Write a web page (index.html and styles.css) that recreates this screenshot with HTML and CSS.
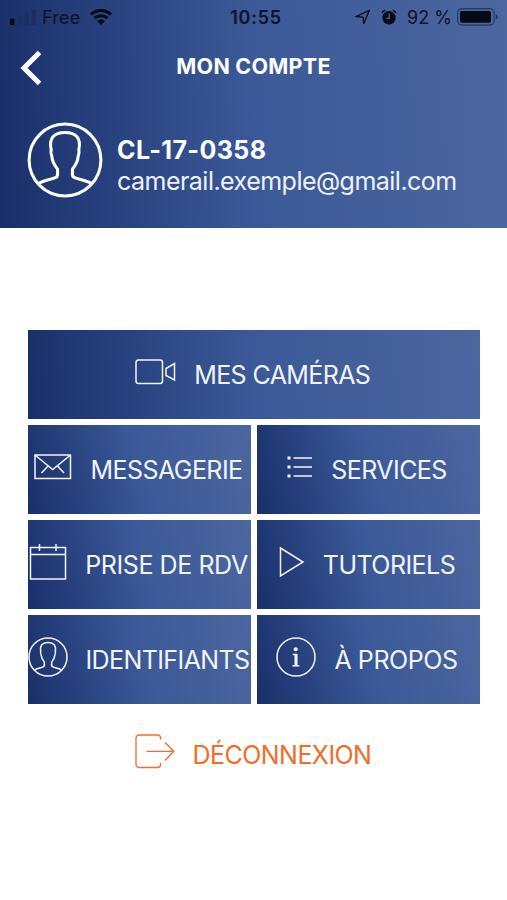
FILE: index.html
```html
<!DOCTYPE html>
<html lang="fr">

<head>
    <meta charset="UTF-8">
    <meta name="viewport" content="width=device-width, initial-scale=1.0">
    <title>Mon compte</title>
    <link rel="stylesheet" href="styles.css">
</head>

<body>
    <header class="header">
        <div class="status-bar">
            <div class="status-left">
                <svg class="signal" width="27" height="16" viewBox="0 0 27 16">
                    <rect x="0" y="9.500" width="4.500" height="6.500" rx="1" />
                    <rect class="off" x="7.500" y="7" width="4.500" height="9" rx="1" />
                    <rect class="off" x="14.500" y="3.500" width="4.500" height="12.500" rx="1" />
                    <rect class="off" x="21.500" y="0" width="4.500" height="16" rx="1" />
                </svg>
                <span class="carrier">Free</span>
                <svg class="wifi" width="22" height="16" viewBox="0 0 22 16">
                    <path d="M1 5.500C6.600 0.200 15.400 0.200 21 5.500M4.500 9.200C8 5.900 14 5.900 17.500 9.200" fill="none" stroke="currentColor" stroke-width="3" />
                    <path d="M7 12C9.200 9.900 12.800 9.900 15 12L11 16Z" />
                </svg>
            </div>
            <span class="clock">10:55</span>
            <div class="status-right">
                <svg class="location" width="16" height="16" viewBox="0 0 15 15">
                    <path d="M1 7.200L13.500 1.200L8.200 13.700L7.600 7.700Z" fill="none" stroke="currentColor" stroke-width="1.200" stroke-linejoin="round" />
                </svg>
                <svg class="alarm" width="16" height="16" viewBox="0 0 16 16">
                    <circle cx="8" cy="8.700" r="6.700" />
                    <path d="M0.900 3.800L4 1M12 1L15.100 3.800" fill="none" stroke="currentColor" stroke-width="1.500" />
                    <path d="M8.300 4.700V9.400H5.200" fill="none" stroke="#42609c" stroke-width="1.300" />
                </svg>
                <span class="percent">92 %</span>
                <svg class="battery" width="42" height="18" viewBox="0 0 42 18">
                    <rect x="0.600" y="0.600" width="36.500" height="16.500" rx="4.500" fill="none" stroke="#25375f" stroke-width="1.100" />
                    <rect x="3" y="3" width="31" height="11.700" rx="2" />
                    <path d="M38.700 6.300C41.400 7.100 41.400 10.800 38.700 11.600Z" fill="#25375f" />
                </svg>
            </div>
        </div>
        <div class="title-bar">
            <svg class="back" width="22" height="36" viewBox="0 0 22 36">
                <path d="M19.500 2.500L4 18L19.500 33.500" fill="none" stroke="#fff" stroke-width="5" />
            </svg>
            <h1>MON COMPTE</h1>
        </div>
        <div class="account">
            <svg class="avatar" width="76" height="76" viewBox="0 0 40 40">
                <circle cx="20" cy="20" r="18.900" />
                <path d="M6 32.300C8.800 30.800 14 30 15.800 28.800C16.300 27.700 16.200 26.200 16 24.700C14.300 22.500 13.200 20.500 13.100 18.200C12.600 17 12.500 15.600 12.700 14.400C11.400 8.500 14.200 5.500 20 5.500C25.800 5.500 28.600 8.500 27.300 14.400C27.500 15.600 27.400 17 26.900 18.200C26.800 20.500 25.700 22.500 24 24.700C23.800 26.200 23.700 27.700 24.200 28.800C26 30 31.200 30.800 34 32.300" />
            </svg>
            <div class="account-info">
                <strong>CL-17-0358</strong>
                <span>camerail.exemple@gmail.com</span>
            </div>
        </div>
    </header>

    <main>
        <nav class="menu">
            <a class="tile wide">
                <svg class="icon" width="41" height="26" viewBox="0 0 41 26">
                    <rect x="1" y="1" width="26.500" height="23.500" rx="2.500" />
                    <path d="M31 9.500L39.500 4.500V21L31 16.500Z" />
                </svg>
                <span class="cameras">MES CAMÉRAS</span>
            </a>
            <a class="tile">
                <svg class="icon" width="38" height="26" viewBox="0 0 38 26">
                    <path d="M1 1H36.500V24.500H1ZM1 1L18.700 15.500L36.500 1M7.500 19L14 12M30 19L23.500 12" />
                </svg>
                <span>MESSAGERIE</span>
            </a>
            <a class="tile">
                <svg class="icon" width="26" height="24" viewBox="0 0 26 24">
                    <path d="M6.500 3H25M6.500 12H25M6.500 21H25" />
                    <path d="M0.500 3H3.500M0.500 12H3.500M0.500 21H3.500" stroke-width="2.800" />
                </svg>
                <span>SERVICES</span>
            </a>
            <a class="tile">
                <svg class="icon" width="38" height="38" viewBox="0 0 38 38">
                    <path d="M1.500 4.500H36.500V36H1.500ZM1.500 11.500H36.500M10.500 1V8M27 1V8" />
                </svg>
                <span class="rdv">PRISE DE RDV</span>
            </a>
            <a class="tile">
                <svg class="icon" width="26" height="32" viewBox="0 0 26 32">
                    <path d="M1.500 2L24 16L1.500 30Z" />
                </svg>
                <span>TUTORIELS</span>
            </a>
            <a class="tile">
                <svg class="icon" width="40" height="40" viewBox="0 0 40 40">
                    <circle cx="20" cy="20" r="19" />
                    <path d="M6.500 33C9 31.300 14 30.800 16 29.400C16.700 28 16.500 26.400 16.200 24.900C14.300 22.500 13.300 20.500 13.200 18.200C12.500 17 12.300 15.600 12.700 14.400C11.700 8.500 14.200 5.500 20 5.500C25.800 5.500 28.300 8.500 27.300 14.400C27.700 15.600 27.500 17 26.800 18.200C26.700 20.500 25.700 22.500 23.800 24.900C23.500 26.400 23.300 28 24 29.400C26 30.800 31 31.300 33.500 33" />
                </svg>
                <span class="ids">IDENTIFIANTS</span>
            </a>
            <a class="tile">
                <svg class="icon" width="40" height="40" viewBox="0 0 40 40">
                    <circle cx="20" cy="20" r="19" />
                    <circle class="solid" cx="19.700" cy="12.300" r="2" />
                    <path d="M16.800 17.500H20.300V28.500M16.500 28.800H23.300" />
                    <path d="M20 17V29" stroke-width="3" />
                </svg>
                <span class="about">À PROPOS</span>
            </a>
        </nav>
        <a class="logout">
            <svg class="icon" width="40" height="35" viewBox="0 0 40 35">
                <path d="M25.500 5.500V4C25.500 2 24.500 1 22.500 1H4.500C2.200 1 1 2.200 1 4.500V30C1 32.300 2.200 33.500 4.500 33.500H22.500C24.500 33.500 25.500 32.500 25.500 30.500V29M11.500 17.300H38.500M30 8.500L38.800 17.300L30 26.500" />
            </svg>
            <span>DÉCONNEXION</span>
        </a>
    </main>
</body>

</html>
```
FILE: styles.css
```css
body {
    margin: 0;
    font-family: Inter, "Liberation Sans", sans-serif;
    background-color: #fff;
}

svg {
    display: block;
    flex-shrink: 0;
}

.header {
    height: 227.5px;
    background: linear-gradient(88deg, #192f6a, #3b5998 50%, #4c669f);
    color: #fff;
}

.status-bar {
    display: grid;
    grid-template-columns: 1fr auto 1fr;
    align-items: center;
    height: 34px;
    padding: 0 8px 0 10px;
    font-size: 18px;
    color: #0b1326;
}

.status-bar svg {
    fill: #050a14;
    color: #050a14;
}

.status-left,
.status-right {
    display: flex;
    align-items: center;
}

.status-right {
    justify-content: flex-end;
}

.signal .off {
    fill: #1c2f60;
}

.carrier {
    margin-left: 5px;
    letter-spacing: 0.2px;
}

.wifi {
    margin-left: 10px;
}

.clock {
    padding-left: 3px;
    font-weight: 600;
    letter-spacing: 0.7px;
}

.location {
    margin-right: 10px;
}

.alarm {
    margin-right: 10px;
}

.percent {
    margin-right: 5px;
}

.title-bar {
    display: grid;
    grid-template-columns: 22px 1fr 22px;
    align-items: center;
    height: 66px;
    padding: 1px 20px 0;
}

h1 {
    margin: -5px 0 0;
    font-size: 21.5px;
    font-weight: 700;
    line-height: 28px;
    letter-spacing: 0.25px;
    text-align: center;
}

.account {
    display: flex;
    align-items: center;
    padding: 21px 0 0 27px;
}

.avatar {
    fill: none;
    stroke: #fff;
    stroke-width: 1.6;
}

.account-info {
    display: flex;
    flex-direction: column;
    margin: 12px 0 0 14px;
    font-size: 25px;
    line-height: 31px;
}

.account-info strong {
    letter-spacing: 0.4px;
}

.account-info span {
    letter-spacing: -0.52px;
    color: #eef1f8;
}

.menu {
    display: grid;
    grid-template-columns: repeat(2, minmax(0, 1fr));
    grid-auto-rows: 89.5px;
    gap: 5.5px;
    margin: 102px 27.5px 0 28px;
}

.tile {
    display: flex;
    align-items: center;
    justify-content: center;
    padding-right: 2px;
    background: linear-gradient(76deg, #192f6a, #3b5998 50%, #4c669f);
    color: #f2f4fa;
}

.wide {
    grid-column: span 2;
    background: linear-gradient(86deg, #192f6a, #3b5998 50%, #4c669f);
}

.tile span,
.logout span {
    margin: 2px 0 0 18px;
    font-size: 25px;
    letter-spacing: -0.55px;
    white-space: nowrap;
}

.tile .cameras,
.tile .ids {
    letter-spacing: -0.6px;
}

.tile .rdv,
.tile .about {
    letter-spacing: -0.42px;
}

.icon {
    margin-bottom: 5px;
    fill: none;
    stroke: currentColor;
    stroke-width: 1.5;
}

.icon .solid {
    fill: currentColor;
    stroke: none;
}

.logout {
    display: flex;
    align-items: center;
    justify-content: center;
    height: 100px;
    padding-right: 1px;
    color: #f26c2a;
}

.logout .icon {
    stroke-width: 1.3;
}
```
